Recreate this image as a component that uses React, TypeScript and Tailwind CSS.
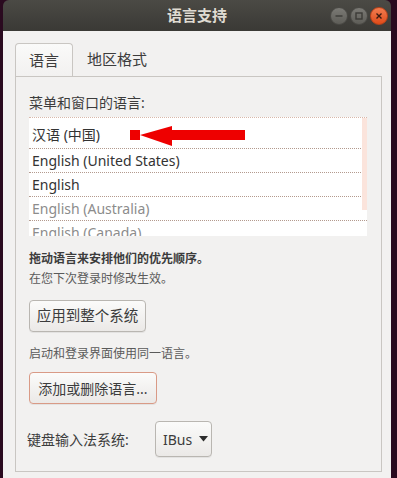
import type { ReactNode } from "react";

const cjk = "font-['Noto_Sans','Noto_Sans_CJK_SC',sans-serif]";

function TitleButton({ kind }: { kind: "min" | "max" | "close" }) {
  const close = kind === "close";
  return (
    <span
      className={`flex h-[18px] w-[18px] items-center justify-center rounded-full border ${
        close
          ? "border-[#b8421a] bg-gradient-to-b from-[#f27c4e] to-[#df4a16]"
          : "border-[#4a4945] bg-gradient-to-b from-[#7b7a75] to-[#5e5d58]"
      }`}
    >
      <svg width="10" height="10" viewBox="0 0 10 10" fill="none" stroke={close ? "#3a1a10" : "#3c3b37"} strokeWidth="1.4">
        {kind === "min" && <path d="M1.5 5h7" />}
        {kind === "max" && <rect x="2" y="2" width="6" height="6" />}
        {kind === "close" && <path d="M2.5 2.5l5 5M7.5 2.5l-5 5" />}
      </svg>
    </span>
  );
}

function Row({ children, dim, first }: { children: ReactNode; dim?: boolean; first?: boolean }) {
  return (
    <div
      className={`flex items-center border-b border-dotted border-[#b39a8e] pl-[3px] text-[14px] ${
        first ? "h-[31px] pt-[3px]" : "h-[24px]"
      } ${dim ? "text-[#8c8c8c]" : "text-[#333333]"}`}
    >
      {children}
    </div>
  );
}

function GtkButton({ children, focus, className = "" }: { children: ReactNode; focus?: boolean; className?: string }) {
  return (
    <div
      className={`flex items-center rounded-[4px] border bg-gradient-to-b from-[#fbfbfa] to-[#ebe9e7] shadow-[0_1px_0_rgba(0,0,0,0.06)] ${
        focus ? "border-[#d99a86]" : "border-[#b9b6b1]"
      } ${className}`}
    >
      {children}
    </div>
  );
}

export default function App() {
  return (
    <div className={`flex h-[478px] w-[397px] overflow-hidden bg-[#2a0a1f] pl-[3px] ${cjk}`}>
      <div className="flex w-[388px] flex-col">
        <header className="relative flex h-[31px] shrink-0 items-center justify-center rounded-t-[6px] bg-gradient-to-b from-[#4b4a45] to-[#3a3935]">
          <span className="text-[15px] font-bold text-[#dfdbd2]">语言支持</span>
          <div className="absolute right-[3px] top-[7px] flex gap-[2px]">
            <TitleButton kind="min" />
            <TitleButton kind="max" />
            <TitleButton kind="close" />
          </div>
        </header>
        <div className="flex-1 bg-[#f2f1f0] pl-[12px] pr-[9px] pt-[12px]">
          <div className="flex h-[33px] items-end">
            <div className="flex h-[33px] w-[58px] items-center justify-center rounded-t-[4px] border border-b-0 border-[#c9c6c2] bg-gradient-to-b from-[#fafaf9] to-[#f2f1f0] text-[15px] text-[#3c3c3c]">
              语言
            </div>
            <div className="flex h-[33px] items-center pl-[14px] text-[15px] text-[#3c3c3c]">地区格式</div>
          </div>
          <div className="h-[396px] border border-[#c9c6c2] pl-[13px] pr-[14px] pt-[15px]">
            <div className="text-[14px] leading-[22px] text-[#3c3c3c]">菜单和窗口的语言:</div>
            <div className="relative mt-[3px] h-[119px] overflow-hidden border-t border-dotted border-[#d8b8aa] bg-white">
              <Row first>
                汉语 (中国)
              </Row>
              <Row>English (United States)</Row>
              <Row>English</Row>
              <Row dim>English (Australia)</Row>
              <Row dim>English (Canada)</Row>
              <div className="absolute right-[0px] top-0 h-[92px] w-[5px] bg-[#fbe4dc]" />
              <svg className="absolute left-[101px] top-[8px]" width="116" height="24" viewBox="0 0 116 24">
                <rect x="0" y="4" width="10" height="10" fill="#ee0000" />
                <rect x="40" y="4" width="75" height="10" fill="#ee0000" />
                <polygon points="10,9 42,0 42,20" fill="#ee0000" />
              </svg>
            </div>
            <div className="mt-[13px] text-[12px] font-bold leading-[20px] text-[#3c3c3c]">拖动语言来安排他们的优先顺序。</div>
            <div className="text-[12px] leading-[20px] text-[#5a5a5a]">在您下次登录时修改生效。</div>
            <GtkButton className="mt-[11px] h-[32px] w-[117px] justify-center text-[14.5px] text-[#3c3c3c]">应用到整个系统</GtkButton>
            <div className="mt-[12px] text-[12px] leading-[20px] text-[#5a5a5a]">启动和登录界面使用同一语言。</div>
            <GtkButton focus className="mt-[8px] h-[32px] w-[128px] justify-center text-[14px] text-[#3c3c3c]">
              添加或删除语言...
            </GtkButton>
            <div className="mt-[17px] flex items-center">
              <span className="-ml-[2px] w-[128px] text-[14px] text-[#3c3c3c]">键盘输入法系统:</span>
              <GtkButton className="h-[36px] w-[57px] gap-[7px] pl-[7px] text-[14px] text-[#3c3c3c]">
                <span>IBus</span>
                <svg width="9" height="6" viewBox="0 0 9 6">
                  <polygon points="0,0 9,0 4.5,5.5" fill="#2d2d2d" />
                </svg>
              </GtkButton>
            </div>
          </div>
        </div>
      </div>
    </div>
  );
}
